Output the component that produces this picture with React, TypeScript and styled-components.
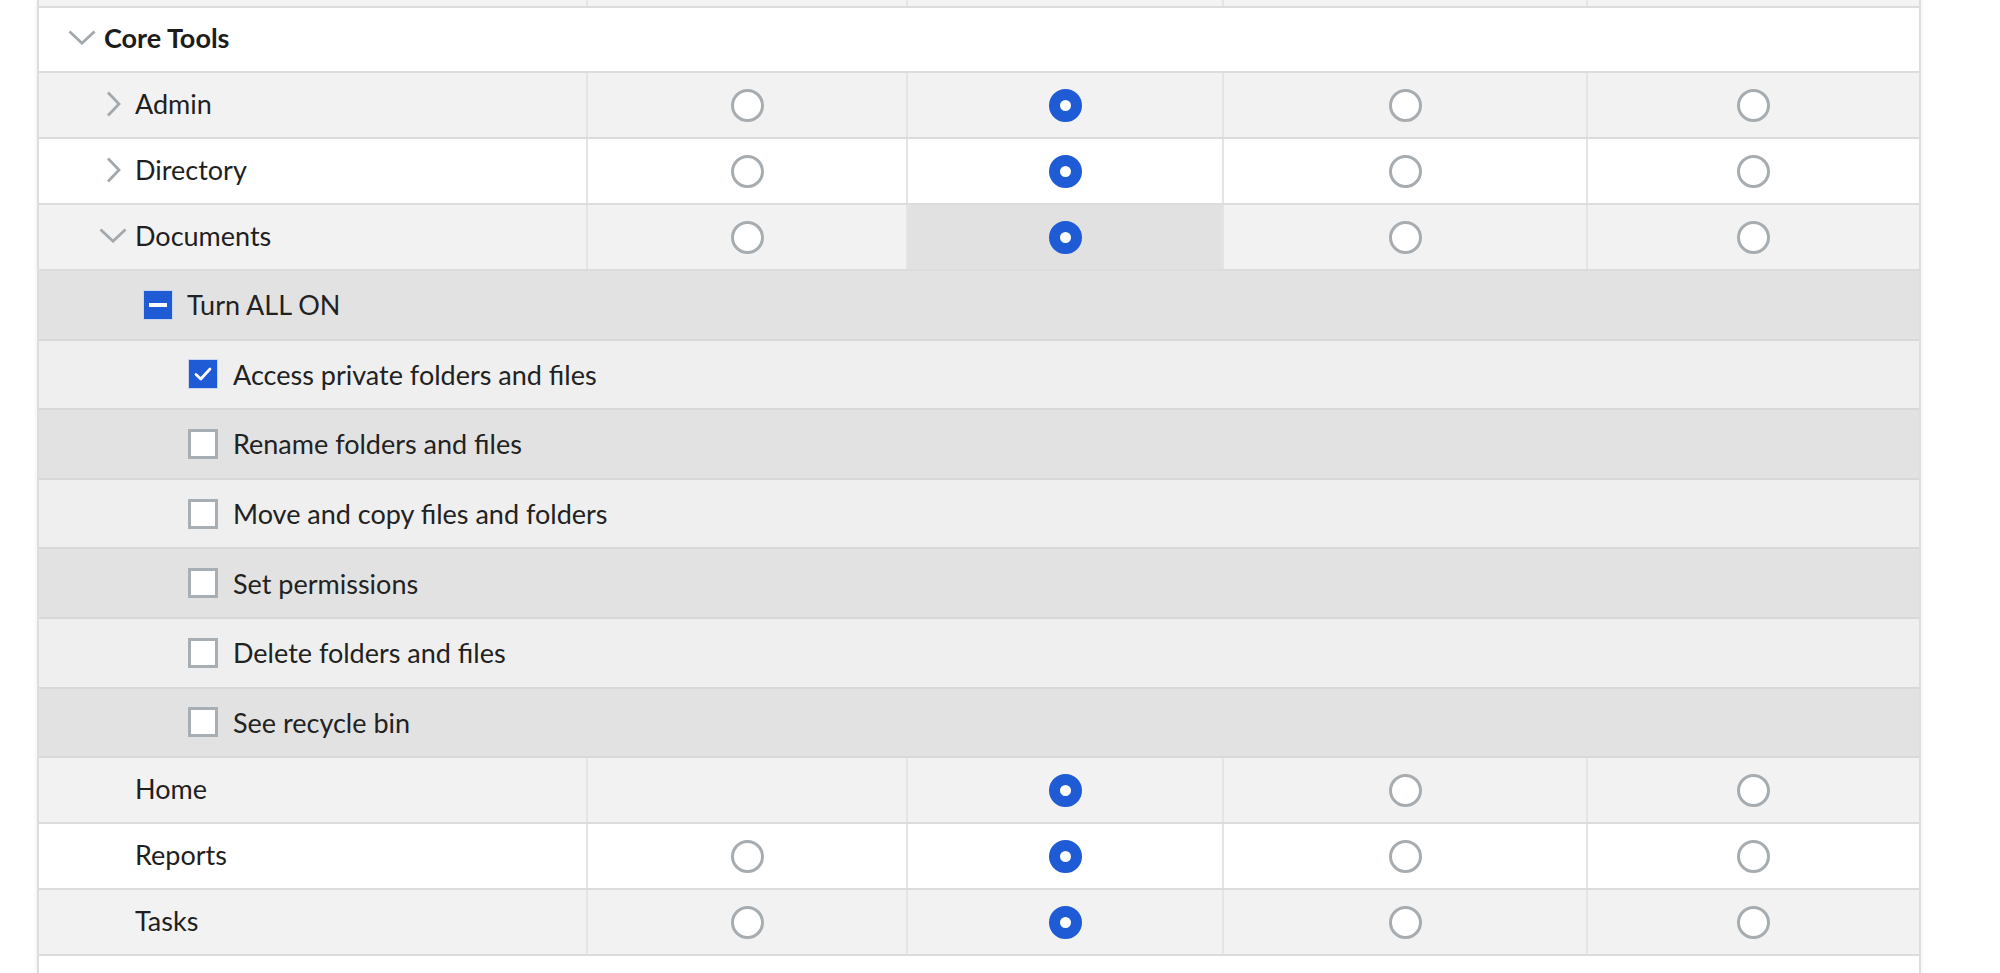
import React from "react";
import styled, { createGlobalStyle, css } from "styled-components";

const GlobalStyle = createGlobalStyle`
  html, body {
    margin: 0;
    padding: 0;
    background: #ffffff;
  }
  body {
    font-family: Lato, "Open Sans", sans-serif;
    color: #1f1f1f;
  }
`;

const BLUE = "#1e5bd4";
const COLUMNS = "547px 320px 316px 364px 333px";

const Page = styled.div`
  width: 2000px;
  height: 973px;
  overflow: hidden;
  background: #ffffff;
`;

const Table = styled.div`
  margin-left: 37px;
  width: 1884px;
  box-sizing: border-box;
  border-left: 2px solid #dddddd;
  border-right: 2px solid #dddddd;
  box-shadow: 2px 0 3px rgba(0, 0, 0, 0.04), -2px 0 3px rgba(0, 0, 0, 0.04);
  background: #ffffff;
  min-height: 973px;
`;

const GridRow = styled.div<{ $bg: string; $height: number }>`
  display: grid;
  grid-template-columns: ${COLUMNS};
  height: ${(p) => p.$height}px;
  background: ${(p) => p.$bg};
  border-bottom: 2px solid #dcdcdc;
`;

const Cell = styled.div<{ $first?: boolean; $hover?: boolean }>`
  display: flex;
  align-items: center;
  justify-content: ${(p) => (p.$first ? "flex-start" : "center")};
  ${(p) =>
    !p.$first &&
    css`
      border-left: 2px solid #e4e4e4;
    `}
  ${(p) =>
    p.$hover &&
    css`
      background: #e1e1e1;
    `}
`;

const NameCell = styled.div<{ $indent: number }>`
  display: flex;
  align-items: center;
  gap: 8px;
  padding-left: ${(p) => p.$indent}px;
  padding-bottom: 3px;
  font-size: 27px;
  line-height: 1;
`;

const IconSlot = styled.span`
  width: 28px;
  height: 28px;
  display: flex;
  align-items: center;
  justify-content: center;
  flex: none;
`;

const SectionRow = styled.div`
  display: flex;
  align-items: center;
  height: 65px;
  padding: 0 0 5px 29px;
  box-sizing: border-box;
  gap: 8px;
  border-bottom: 2px solid #dcdcdc;
  background: #ffffff;
`;

const SectionTitle = styled.span`
  font-size: 27px;
  font-weight: 700;
  color: #1c1c1c;
`;

const OptionRow = styled.label<{ $bg: string; $indent: number; $gap: number }>`
  display: flex;
  align-items: center;
  gap: ${(p) => p.$gap}px;
  height: 67.6px;
  padding-left: ${(p) => p.$indent}px;
  background: ${(p) => p.$bg};
  border-bottom: 2px solid #d8d8d8;
  font-size: 27px;
  color: #222222;
`;

const Radio = styled.span<{ $on: boolean }>`
  box-sizing: border-box;
  width: 33px;
  height: 33px;
  border-radius: 50%;
  background: #ffffff;
  border: ${(p) => (p.$on ? `11px solid ${BLUE}` : "3.5px solid #a6acaf")};
`;

const Box = styled.span<{ $state: "on" | "off" | "mixed" }>`
  box-sizing: border-box;
  width: 30px;
  height: 30px;
  display: flex;
  align-items: center;
  justify-content: center;
  flex: none;
  ${(p) =>
    p.$state === "off"
      ? css`
          background: #ffffff;
          border: 3.5px solid #a8afb4;
        `
      : css`
          background: ${BLUE};
          border: 1px solid #c9d6f2;
        `}
`;

const Dash = styled.span`
  width: 18px;
  height: 4px;
  background: #ffffff;
`;

const ChevronDown = () => (
  <svg width="28" height="15" viewBox="0 0 28 15">
    <polyline points="1.5,1.5 14,13.2 26.5,1.5" fill="none" stroke="#a2a8ac" strokeWidth="2.8" />
  </svg>
);

const ChevronRight = () => (
  <svg width="15" height="26" viewBox="0 0 15 26">
    <polyline points="2,1.5 13,13 2,24.5" fill="none" stroke="#a2a8ac" strokeWidth="2.8" />
  </svg>
);

const Check = () => (
  <svg width="18" height="14" viewBox="0 0 18 14">
    <polyline points="2,7.5 6.8,12 16,2" fill="none" stroke="#ffffff" strokeWidth="2.8" strokeLinecap="round" strokeLinejoin="round" />
  </svg>
);

type Tool = {
  name: string;
  chevron?: "right" | "down";
  radios: (boolean | null)[];
  bg: string;
  hover?: number;
};

const tools: Tool[] = [
  { name: "Admin", chevron: "right", radios: [false, true, false, false], bg: "#f2f2f2" },
  { name: "Directory", chevron: "right", radios: [false, true, false, false], bg: "#ffffff" },
  { name: "Documents", chevron: "down", radios: [false, true, false, false], bg: "#f2f2f2", hover: 1 },
  { name: "Home", radios: [null, true, false, false], bg: "#f2f2f2" },
  { name: "Reports", radios: [false, true, false, false], bg: "#ffffff" },
  { name: "Tasks", radios: [false, true, false, false], bg: "#f2f2f2" },
];

const options = [
  { label: "Access private folders and files", on: true },
  { label: "Rename folders and files", on: false },
  { label: "Move and copy files and folders", on: false },
  { label: "Set permissions", on: false },
  { label: "Delete folders and files", on: false },
  { label: "See recycle bin", on: false },
];

const ToolRow = ({ tool }: { tool: Tool }) => (
  <GridRow $bg={tool.bg} $height={64}>
    <Cell $first>
      <NameCell $indent={60}>
        <IconSlot>
          {tool.chevron === "right" && <ChevronRight />}
          {tool.chevron === "down" && <ChevronDown />}
        </IconSlot>
        {tool.name}
      </NameCell>
    </Cell>
    {tool.radios.map((r, i) => (
      <Cell key={i} $hover={tool.hover === i}>
        {r !== null && <Radio $on={r} />}
      </Cell>
    ))}
  </GridRow>
);

const DocumentOptions = () => (
  <>
    <OptionRow $bg="#e2e2e2" $indent={104} $gap={14}>
      <Box $state="mixed">
        <Dash />
      </Box>
      Turn ALL ON
    </OptionRow>
    {options.map((o, i) => (
      <OptionRow key={o.label} $bg={i % 2 === 0 ? "#efefef" : "#e2e2e2"} $indent={149} $gap={15}>
        <Box $state={o.on ? "on" : "off"}>{o.on && <Check />}</Box>
        {o.label}
      </OptionRow>
    ))}
  </>
);

export default function App() {
  return (
    <Page>
      <GlobalStyle />
      <Table>
        <GridRow $bg="#f3f3f3" $height={6}>
          <Cell $first />
          <Cell />
          <Cell />
          <Cell />
          <Cell />
        </GridRow>
        <SectionRow>
          <IconSlot>
            <ChevronDown />
          </IconSlot>
          <SectionTitle>Core Tools</SectionTitle>
        </SectionRow>
        {tools.slice(0, 3).map((t) => (
          <ToolRow key={t.name} tool={t} />
        ))}
        <DocumentOptions />
        {tools.slice(3).map((t) => (
          <ToolRow key={t.name} tool={t} />
        ))}
      </Table>
    </Page>
  );
}
